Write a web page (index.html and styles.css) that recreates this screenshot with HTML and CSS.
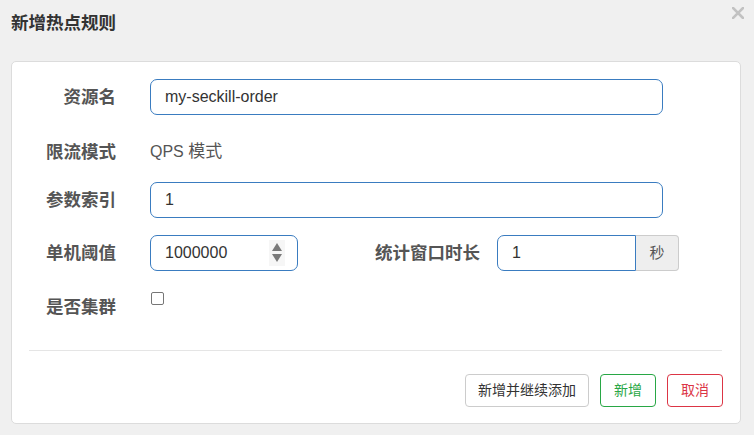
FILE: index.html
```html
<!DOCTYPE html>
<html lang="zh-CN">
<head>
<meta charset="utf-8">
<title>新增热点规则</title>
<link rel="stylesheet" href="styles.css">
</head>
<body>
<div class="dialog">
  <div class="header">
    <h1 class="title">新增热点规则</h1>
    <svg class="close" width="12" height="12" viewBox="0 0 12 12"><path d="M1 1 L11 11 M11 1 L1 11" stroke="#c2c2c2" stroke-width="2.6" stroke-linecap="square" fill="none"/></svg>
  </div>
  <div class="card">
    <div class="row r1">
      <div class="label">资源名</div>
      <div class="input wide">my-seckill-order</div>
    </div>
    <div class="row r2">
      <div class="label">限流模式</div>
      <div class="static">QPS <span class="cjk">模式</span></div>
    </div>
    <div class="row r3">
      <div class="label">参数索引</div>
      <div class="input wide">1</div>
    </div>
    <div class="row r4">
      <div class="label">单机阈值</div>
      <div class="input spin">
        <span>1000000</span>
        <span class="arrows">
          <svg width="12" height="20" viewBox="0 0 12 20"><path d="M6 0 L11 8 L1 8 Z M1 11 L11 11 L6 19 Z" fill="#7a7a7a"/></svg>
        </span>
      </div>
      <div class="label label2">统计窗口时长</div>
      <div class="group">
        <div class="input gin">1</div>
        <div class="addon">秒</div>
      </div>
    </div>
    <div class="row r5">
      <div class="label lcheck">是否集群</div>
      <div class="checkbox"></div>
    </div>
    <div class="divider"></div>
    <div class="footer">
      <button class="btn btn-default">新增并继续添加</button>
      <button class="btn btn-green">新增</button>
      <button class="btn btn-red">取消</button>
    </div>
  </div>
</div>
</body>
</html>
```

FILE: styles.css
```css
html, body {
  margin: 0;
  padding: 0;
  background: #f0f0f0;
  width: 754px;
  height: 435px;
  overflow: hidden;
  font-family: "Liberation Sans", "Noto Sans CJK SC", sans-serif;
  color: #333;
}
.dialog {
  position: relative;
}
.header {
  height: 61px;
  box-sizing: border-box;
  padding: 11px 0 0 11px;
}
.title {
  margin: 0;
  font-size: 17.5px;
  line-height: 24px;
  font-weight: bold;
  color: #333;
}
.close {
  position: absolute;
  left: 732px;
  top: 7px;
}
.card {
  margin: 0 13px 0 11px;
  background: #fff;
  border: 1px solid #dcdcdc;
  border-radius: 5px;
  height: 363px;
  box-sizing: border-box;
  padding: 17px 17px 17px 17px;
}
.row {
  display: flex;
  align-items: center;
  height: 35px;
}
.r1, .r3, .r4 { margin-bottom: 18px; }
.r2 { margin-bottom: 15px; }
.r2 .label, .r2 .static { padding-top: 4px; }
.r5 {
  align-items: flex-start;
  height: 40px;
}
.label {
  width: 87px;
  margin-right: 34px;
  text-align: right;
  font-weight: bold;
  font-size: 17.5px;
  line-height: 24px;
  color: #555;
  flex: none;
  white-space: nowrap;
}
.label2 {
  width: 182px;
  margin-right: 17px;
}
.lcheck {
  padding-top: 7px;
}
.static {
  font-size: 16px;
  line-height: 24px;
  color: #555;
}
.cjk {
  font-size: 17px;
}
.input {
  box-sizing: border-box;
  height: 36px;
  border: 1px solid #3a7cc0;
  border-radius: 7px;
  padding: 0 14px;
  font-size: 16px;
  line-height: 34px;
  color: #333;
  background: #fff;
  flex: none;
}
.wide { width: 513px; }
.spin {
  width: 148px;
  display: flex;
  justify-content: space-between;
  align-items: center;
  padding-right: 16px;
}
.arrows {
  display: flex;
  align-items: center;
  justify-content: center;
  width: 16px;
  height: 26px;
  background: #f6f6f6;
  margin-right: -4px;
}
.arrows svg { display: block; }
.group {
  display: flex;
  flex: none;
}
.gin {
  width: 139px;
  border-radius: 7px 0 0 7px;
}
.addon {
  box-sizing: border-box;
  width: 43px;
  height: 36px;
  background: #eee;
  border: 1px solid #ccc;
  border-left: none;
  border-radius: 0 4px 4px 0;
  text-align: center;
  font-size: 15px;
  line-height: 34px;
  color: #555;
}
.checkbox {
  box-sizing: border-box;
  width: 13px;
  height: 13px;
  border: 1px solid #767676;
  border-radius: 2px;
  background: #fff;
  margin-top: 4px;
  margin-left: 1px;
}
.divider {
  height: 1px;
  background: #e5e5e5;
  margin-top: 22px;
  margin-right: 1px;
}
.footer {
  display: flex;
  justify-content: flex-end;
  gap: 11px;
  margin-top: 23px;
}
.btn {
  box-sizing: border-box;
  height: 33px;
  padding: 0;
  border-radius: 4px;
  background: #fff;
  font-family: "Liberation Sans", "Noto Sans CJK SC", sans-serif;
  font-size: 14px;
  line-height: 31px;
  border: 1px solid #ccc;
  color: #333;
  white-space: nowrap;
  text-align: center;
}
.btn-default { width: 124px; }
.btn-green {
  width: 56px;
  border-color: #28a745;
  color: #28a745;
}
.btn-red {
  width: 56px;
  border-color: #dc3545;
  color: #dc3545;
}
```
